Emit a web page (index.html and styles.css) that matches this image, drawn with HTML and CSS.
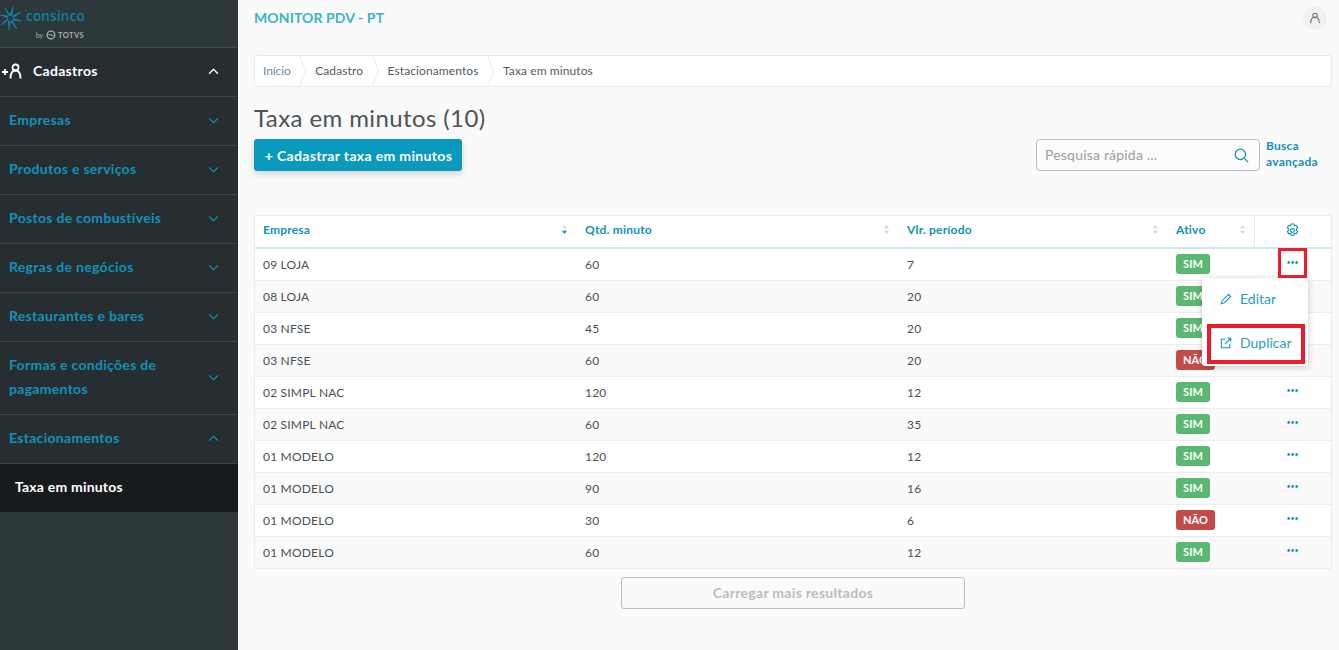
FILE: index.html
```html
<!DOCTYPE html>
<html lang="pt">
<head>
<meta charset="utf-8">
<title>Taxa em minutos</title>
<link rel="stylesheet" href="styles.css">
</head>
<body>
<aside class="sidebar">
  <div class="logo">
    <svg class="logo-mark" viewBox="0 0 22 24" width="22" height="24">
      <g fill="#118fb4" stroke="#118fb4" stroke-width=".6" stroke-linejoin="round">
        <path d="M10 9.500 L11.800 9.500 L13 0.500 Z"/>
        <path d="M12.500 10 L13.500 11.500 L21 6 Z"/>
        <path d="M13.500 12.500 L13 14 L21.500 15 Z"/>
        <path d="M12 14.500 L10.800 15.500 L17 23 Z"/>
        <path d="M10 15.500 L8.500 15 L9 23.500 Z"/>
        <path d="M8 14 L7.500 12.800 L1 19 Z"/>
        <path d="M7.500 11.500 L8 10 L0.500 9 Z"/>
        <path d="M9 9.500 L10 9 L5 2 Z"/>
      </g>
    </svg>
    <div class="logo-text">
      <div class="logo-name">consinco</div>
      <div class="logo-by"><span class="by">by</span>
        <svg viewBox="0 0 12 12" width="10" height="10"><circle cx="6" cy="6" r="4.600" fill="none" stroke="#a8adae" stroke-width="1.600"/><path d="M3 5 L9 7" stroke="#a8adae" stroke-width="1.300"/></svg>
        <span class="totvs">TOTVS</span></div>
    </div>
  </div>
  <nav>
    <div class="nav-item head">
      <svg class="nav-icon" viewBox="0 0 22 16" width="22" height="16"><g fill="none" stroke="#fff" stroke-width="1.800"><path d="M1 9h6M4 6v6"/><circle cx="14.500" cy="4.500" r="3"/><path d="M9.500 15.500c0-5 1.500-8 5-8s5 3 5 8"/></g></svg>
      <span class="nav-label">Cadastros</span>
      <svg class="chev" viewBox="0 0 12 8" width="11" height="7"><path d="M1 6.500 L6 1.500 L11 6.500" fill="none" stroke="#fff" stroke-width="1.600"/></svg>
    </div>
    <div class="nav-item"><span class="nav-label">Empresas</span><svg class="chev" viewBox="0 0 12 8" width="11" height="7"><path d="M1 1.500 L6 6.500 L11 1.500" fill="none" stroke="#1192b8" stroke-width="1.300"/></svg></div>
    <div class="nav-item"><span class="nav-label">Produtos e serviços</span><svg class="chev" viewBox="0 0 12 8" width="11" height="7"><path d="M1 1.500 L6 6.500 L11 1.500" fill="none" stroke="#1192b8" stroke-width="1.300"/></svg></div>
    <div class="nav-item"><span class="nav-label">Postos de combustíveis</span><svg class="chev" viewBox="0 0 12 8" width="11" height="7"><path d="M1 1.500 L6 6.500 L11 1.500" fill="none" stroke="#1192b8" stroke-width="1.300"/></svg></div>
    <div class="nav-item"><span class="nav-label">Regras de negócios</span><svg class="chev" viewBox="0 0 12 8" width="11" height="7"><path d="M1 1.500 L6 6.500 L11 1.500" fill="none" stroke="#1192b8" stroke-width="1.300"/></svg></div>
    <div class="nav-item"><span class="nav-label">Restaurantes e bares</span><svg class="chev" viewBox="0 0 12 8" width="11" height="7"><path d="M1 1.500 L6 6.500 L11 1.500" fill="none" stroke="#1192b8" stroke-width="1.300"/></svg></div>
    <div class="nav-item tall"><span class="nav-label">Formas e condições de pagamentos</span><svg class="chev" viewBox="0 0 12 8" width="11" height="7"><path d="M1 1.500 L6 6.500 L11 1.500" fill="none" stroke="#1192b8" stroke-width="1.300"/></svg></div>
    <div class="nav-item"><span class="nav-label">Estacionamentos</span><svg class="chev" viewBox="0 0 12 8" width="11" height="7"><path d="M1 6.500 L6 1.500 L11 6.500" fill="none" stroke="#1192b8" stroke-width="1.300"/></svg></div>
    <div class="nav-sub">Taxa em minutos</div>
  </nav>
</aside>
<main class="main">
  <header class="topbar">
    <div class="app-title">MONITOR PDV - PT</div>
    <div class="avatar"><svg viewBox="0 0 14 14" width="12" height="12"><g fill="none" stroke="#66757c" stroke-width="1.300"><circle cx="7" cy="4" r="2.600"/><path d="M2 13c0-4.500 1.500-7 5-7s5 2.500 5 7"/></g></svg></div>
  </header>
  <div class="crumbs">
    <span class="crumb first">Início</span>
    <svg class="sep" viewBox="0 0 8 32" width="7" height="30" preserveAspectRatio="none"><path d="M0.500 0 L7.500 16 L0.500 32" fill="none" stroke="#e6e8e9"/></svg>
    <span class="crumb">Cadastro</span>
    <svg class="sep" viewBox="0 0 8 32" width="7" height="30" preserveAspectRatio="none"><path d="M0.500 0 L7.500 16 L0.500 32" fill="none" stroke="#e6e8e9"/></svg>
    <span class="crumb">Estacionamentos</span>
    <svg class="sep" viewBox="0 0 8 32" width="7" height="30" preserveAspectRatio="none"><path d="M0.500 0 L7.500 16 L0.500 32" fill="none" stroke="#e6e8e9"/></svg>
    <span class="crumb">Taxa em minutos</span>
  </div>
  <h1 class="title">Taxa em minutos (10)</h1>
  <div class="actions">
    <button class="btn-primary">+ Cadastrar taxa em minutos</button>
    <div class="search-group">
      <div class="search">
        <span class="placeholder">Pesquisa rápida ...</span>
        <svg viewBox="0 0 16 16" width="15" height="15"><g fill="none" stroke="#1192b8" stroke-width="1.300"><circle cx="6.800" cy="6.800" r="5.500"/><path d="M11 11 L15 15"/></g></svg>
      </div>
      <a class="adv">Busca avançada</a>
    </div>
  </div>
  <div class="table-wrap">
    <table class="grid">
      <colgroup><col class="c1"><col class="c2"><col class="c3"><col class="c4"><col class="c5"></colgroup>
      <thead>
        <tr>
          <th><div class="th-in">Empresa<svg class="sort" viewBox="0 0 8 12" width="7" height="11"><path d="M4 1 L7 4.500 H1 Z" fill="#d5d8da"/><path d="M4 11 L7 7.500 H1 Z" fill="#1192b8"/></svg></div></th>
          <th><div class="th-in">Qtd. minuto<svg class="sort" viewBox="0 0 8 12" width="7" height="11"><path d="M4 1 L7 4.500 H1 Z" fill="#d5d8da"/><path d="M4 11 L7 7.500 H1 Z" fill="#d5d8da"/></svg></div></th>
          <th><div class="th-in">Vlr. período<svg class="sort" viewBox="0 0 8 12" width="7" height="11"><path d="M4 1 L7 4.500 H1 Z" fill="#d5d8da"/><path d="M4 11 L7 7.500 H1 Z" fill="#d5d8da"/></svg></div></th>
          <th><div class="th-in">Ativo<svg class="sort" viewBox="0 0 8 12" width="7" height="11"><path d="M4 1 L7 4.500 H1 Z" fill="#d5d8da"/><path d="M4 11 L7 7.500 H1 Z" fill="#d5d8da"/></svg></div></th>
          <th class="gear"><svg viewBox="0 0 16 16" width="15" height="15"><g fill="none" stroke="#1192b8" stroke-width="1.200" stroke-linejoin="round"><path d="M6.500 1h3l.6 2 1.900-.6 1.500 2.600-1.400 1.500 0 1 1.400 1.500-1.500 2.600-1.900-.6-.6 2h-3l-.6-2-1.900.6-1.500-2.600 1.400-1.500 0-1-1.400-1.500 1.500-2.600 1.900.6z"/><circle cx="8" cy="8" r="2"/></g></svg></th>
        </tr>
      </thead>
      <tbody>
        <tr><td>09 LOJA</td><td>60</td><td>7</td><td><span class="tag yes">SIM</span></td><td class="dots">•••</td></tr>
        <tr><td>08 LOJA</td><td>60</td><td>20</td><td><span class="tag yes">SIM</span></td><td class="dots"></td></tr>
        <tr><td>03 NFSE</td><td>45</td><td>20</td><td><span class="tag yes">SIM</span></td><td class="dots"></td></tr>
        <tr><td>03 NFSE</td><td>60</td><td>20</td><td><span class="tag no">NÃO</span></td><td class="dots"></td></tr>
        <tr><td>02 SIMPL NAC</td><td>120</td><td>12</td><td><span class="tag yes">SIM</span></td><td class="dots">•••</td></tr>
        <tr><td>02 SIMPL NAC</td><td>60</td><td>35</td><td><span class="tag yes">SIM</span></td><td class="dots">•••</td></tr>
        <tr><td>01 MODELO</td><td>120</td><td>12</td><td><span class="tag yes">SIM</span></td><td class="dots">•••</td></tr>
        <tr><td>01 MODELO</td><td>90</td><td>16</td><td><span class="tag yes">SIM</span></td><td class="dots">•••</td></tr>
        <tr><td>01 MODELO</td><td>30</td><td>6</td><td><span class="tag no">NÃO</span></td><td class="dots">•••</td></tr>
        <tr><td>01 MODELO</td><td>60</td><td>12</td><td><span class="tag yes">SIM</span></td><td class="dots">•••</td></tr>
      </tbody>
    </table>
    <div class="menu">
      <div class="menu-row">
        <svg viewBox="0 0 14 14" width="12" height="12"><g fill="none" stroke="#1192b8" stroke-width="1.200"><path d="M1.500 12.500 L2.500 9 L10 1.500 L12.500 4 L5 11.500 Z"/></g></svg>
        <span>Editar</span>
      </div>
      <div class="menu-row">
        <svg viewBox="0 0 14 14" width="12" height="12"><g fill="none" stroke="#1192b8" stroke-width="1.200"><path d="M6 2.500 H1.500 V12.500 H11.500 V8"/><path d="M6 8 L12.500 1.500 M8.500 1.500 H12.500 V5.500"/></g></svg>
        <span>Duplicar</span>
      </div>
    </div>
    <div class="mark mark-dots"></div>
    <div class="mark mark-dup"></div>
  </div>
  <div class="more"><button class="btn-more">Carregar mais resultados</button></div>
</main>
</body>
</html>
```
FILE: styles.css
```css
* { box-sizing: border-box; }
html, body { margin: 0; height: 650px; overflow: hidden; }
body {
  display: flex;
  background: #fafafa;
  font-family: "Lato", "Open Sans", sans-serif;
  color: #4a4f55;
}
.sidebar {
  width: 238px;
  flex: none;
  height: 650px;
  background: #2d383b;
}
.logo {
  height: 48px;
  display: flex;
  align-items: flex-start;
  padding-top: 6px;
  border-bottom: 1px solid #414b4e;
}
.logo-mark { flex: none; }
.logo-text { margin-left: 4px; width: 58px; }
.logo-name { font-family: "Open Sans", sans-serif; font-size: 13.500px; font-weight: 600; line-height: 17px; color: #0f7ea3; letter-spacing: .2px; margin-top: 2px; }
.logo-by { display: flex; align-items: center; justify-content: flex-end; gap: 2px; height: 14px; margin-top: 3px; color: #a8adae; }
.by { font-size: 7px; margin-right: 1px; }
.totvs { font-size: 7.500px; font-weight: 700; letter-spacing: .4px; }
.nav-item {
  display: flex;
  align-items: center;
  height: 49px;
  padding: 0 19px 2px 9px;
  border-bottom: 1px solid #3b4548;
  background: #272e32;
  color: #1192b8;
  font-size: 14px;
  font-weight: 700;
  letter-spacing: .3px;
}
.nav-item.tall { height: 73px; line-height: 24px; }
.nav-item.head { color: #fff; padding-left: 1px; }
.nav-icon { margin-right: 10px; flex: none; }
.nav-label { flex: 1; padding-bottom: 2px; }
.tall .nav-label { padding-right: 30px; padding-bottom: 0; }
.chev { flex: none; }
.nav-sub {
  height: 48px;
  display: flex;
  align-items: center;
  padding: 0 0 4px 15px;
  background: #181b1e;
  color: #fff;
  font-size: 14px;
  font-weight: 700;
  letter-spacing: .2px;
}
.main {
  flex: 1;
  min-width: 0;
  padding: 0 7px 0 16px;
  display: flex;
  flex-direction: column;
}
.topbar {
  height: 55px;
  display: flex;
  justify-content: space-between;
  align-items: flex-start;
  padding-top: 6px;
}
.app-title { color: #3bb3c6; font-size: 14px; font-weight: 700; line-height: 24px; letter-spacing: .1px; }
.avatar {
  width: 24px; height: 24px; border-radius: 50%;
  background: #f1f1f1;
  display: flex; align-items: center; justify-content: center;
  margin-right: 5px;
}
.crumbs {
  display: flex;
  align-items: center;
  height: 32px;
  background: #fff;
  border: 1px solid #e8eaeb;
  border-radius: 3px;
  padding-left: 8px;
  font-size: 12px;
  color: #555b60;
}
.crumb { padding: 0 8.500px 2px 9px; letter-spacing: .1px; white-space: nowrap; }
.crumb.first { padding-left: 0; color: #6a8a9c; letter-spacing: -.1px; }
.sep { flex: none; }
.title {
  margin: 15px 0 0;
  font-size: 24px;
  font-weight: 400;
  line-height: 32px;
  height: 37px;
  color: #4d5358;
  letter-spacing: .4px;
}
.actions {
  display: flex;
  justify-content: space-between;
  align-items: flex-start;
  height: 76px;
}
.btn-primary {
  height: 32px;
  width: 208px;
  border: 0;
  border-radius: 3px;
  background: #0b9abd;
  color: #fff;
  font: 700 14px "Lato", sans-serif;
  letter-spacing: .35px;
  box-shadow: 0 3px 7px rgba(0,0,0,.16);
  padding: 0 0 0 1px;
}
.search-group { display: flex; gap: 6px; width: 296px; }
.search {
  width: 224px;
  height: 32px;
  border: 1px solid #b7bcbc;
  border-radius: 4px;
  background: #fcfcfc;
  display: flex;
  align-items: center;
  justify-content: space-between;
  padding: 0 10px 2px 8px;
  font-size: 14px;
  color: #9a9fa2;
}
.search svg { margin-top: 2px; }
.placeholder { letter-spacing: .2px; }
.adv { display: block; width: 60px; margin-top: -1px; color: #1192b8; font-size: 12px; font-weight: 700; line-height: 16px; letter-spacing: .25px; }
.table-wrap { position: relative; border: 1px solid #e9ebec; border-radius: 2px; }
.grid {
  width: 100%;
  table-layout: fixed;
  border-collapse: collapse;
  background: #fff;
  font-size: 12px;
}
.c1 { width: 321px; } .c2 { width: 322px; } .c3 { width: 269px; } .c4 { width: 87px; } .c5 { width: 77px; }
th {
  height: 32px;
  padding: 0;
  border-bottom: 2px solid #cfe7ef;
  color: #1192b8;
  font-weight: 700;
  text-align: left;
  font-size: 12px;
  letter-spacing: .2px;
  vertical-align: top;
}
.th-in { display: flex; justify-content: space-between; align-items: center; padding: 0 8px 0 9px; height: 26px; }
th:first-child .th-in { padding-left: 8px; }
.sort { flex: none; }
th.gear { border-left: 1px solid #e9ebec; text-align: center; padding-top: 7px; }
td {
  height: 32px;
  padding: 0 9px;
  border-bottom: 1px solid #eceeef;
  letter-spacing: .2px;
  color: #4a4f55;
}
td:first-child { padding-left: 8px; }
tbody tr:nth-child(even) { background: #fafafa; }
tbody tr:last-child td { border-bottom: 0; }
.tag {
  display: inline-block;
  height: 20px;
  line-height: 20px;
  padding: 0 7px;
  border-radius: 3px;
  color: #fff;
  font-size: 11px;
  font-weight: 700;
  letter-spacing: .1px;
}
.yes { background: #5cb870; }
.no { background: #c24a47; }
.dots { text-align: center; color: #1192b8; font-size: 7px; letter-spacing: 0; padding: 0 0 4px; }
.menu {
  position: absolute;
  left: 947px;
  top: 62px;
  width: 106px;
  height: 88px;
  background: #fff;
  border-radius: 3px;
  box-shadow: 0 1px 6px rgba(0,0,0,.22);
  color: #2a9dc0;
  font-size: 14px;
}
.menu-row { height: 44px; display: flex; align-items: center; gap: 8px; padding: 0 0 2px 18px; }
.menu-row span { padding-bottom: 2px; }
.mark { position: absolute; border: 3px solid #ec1c2b; }
.mark-dots { left: 1023px; top: 32px; width: 29px; height: 30px; }
.mark-dup { left: 952px; top: 108px; width: 98px; height: 40px; border-width: 4px; }
.more { display: flex; justify-content: center; padding-top: 8px; }
.btn-more {
  width: 344px;
  height: 32px;
  background: transparent;
  border: 1px solid #b7bcbc;
  border-radius: 3px;
  color: #b9bdbf;
  font: 700 14px "Lato", sans-serif;
  letter-spacing: .3px;
  padding: 0 0 2px;
}
```
